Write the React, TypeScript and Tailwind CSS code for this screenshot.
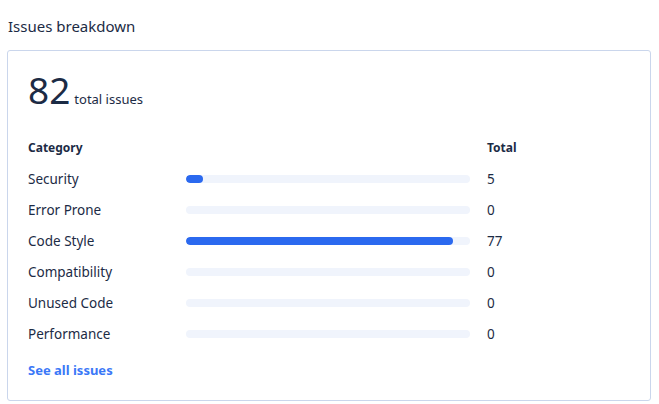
const rows = [
  { name: 'Security', total: 5 },
  { name: 'Error Prone', total: 0 },
  { name: 'Code Style', total: 77 },
  { name: 'Compatibility', total: 0 },
  { name: 'Unused Code', total: 0 },
  { name: 'Performance', total: 0 },
];

const sum = rows.reduce((a, r) => a + r.total, 0);

export default function App() {
  return (
    <div
      className="min-h-screen bg-white px-[7px] pt-[16px] text-[#1c2b45]"
      style={{ fontFamily: '"Noto Sans", "Open Sans", sans-serif' }}
    >
      <h2 className="text-[15px] leading-[20px] ml-px">Issues breakdown</h2>
      <div className="mt-[14px] w-[644px] border border-[#cad6ec] rounded-[3px] px-[20px] pt-[17px] pb-[20px]">
        <div className="flex items-baseline gap-[4px]">
          <span className="text-[37px] leading-[44px]">{sum}</span>
          <span className="text-[13px]">total issues</span>
        </div>

        <div className="mt-[26px] grid grid-cols-[141px_284px_1fr] gap-x-[17px] items-center">
          <div className="text-[12px] font-bold leading-[20px]">Category</div>
          <div />
          <div className="text-[12px] font-bold leading-[20px]">Total</div>
          {rows.map((r) => (
            <div key={r.name} className="contents">
              <div className="text-[13.5px] leading-[20px] mt-[11px]">{r.name}</div>
              <div className="h-[8px] rounded-full bg-[#f0f4fc] mt-[11px] overflow-hidden">
                <div
                  className="h-full rounded-full bg-[#2b69ef]"
                  style={{ width: `${(r.total / sum) * 100}%` }}
                />
              </div>
              <div className="text-[13.5px] leading-[20px] mt-[11px]">{r.total}</div>
            </div>
          ))}
        </div>

        <a href="#" className="block mt-[16px] text-[13px] font-bold text-[#3b78f7] leading-[20px]">
          See all issues
        </a>
      </div>
    </div>
  );
}
